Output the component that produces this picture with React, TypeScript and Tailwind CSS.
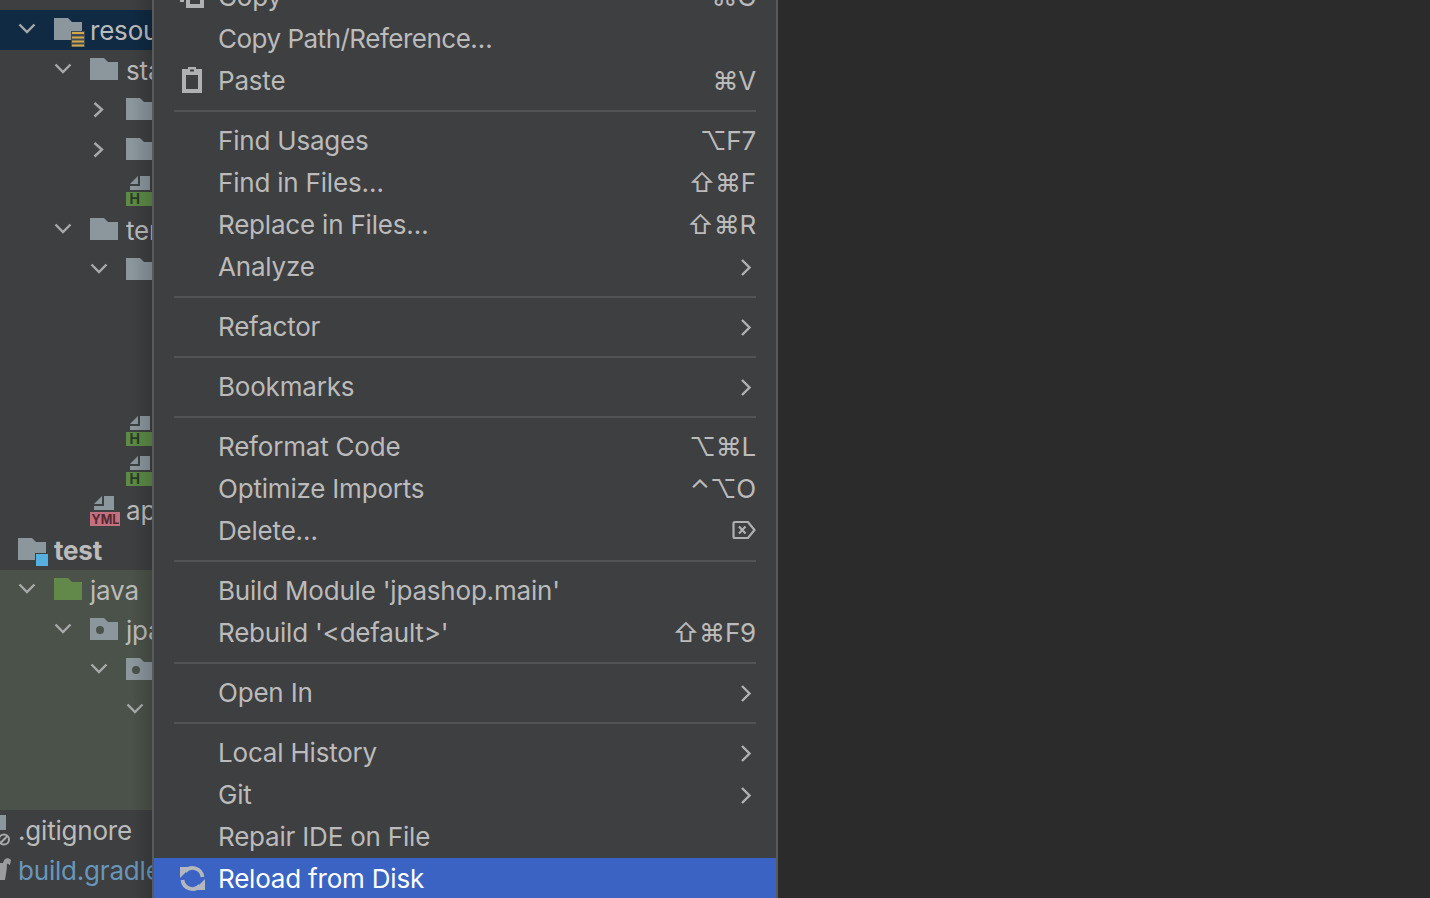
import React from "react";

const Chevron = ({ open }: { open: boolean }) => (
  <svg width="36" height="40" viewBox="0 0 36 40" fill="none" stroke="#a7a9aa" strokeWidth="2.4" className="shrink-0">
    {open ? <path d="M1.5 14.5 L9 22 L16.5 14.5" /> : <path d="M4.5 13 L12 19.5 L4.5 26.5" />}
  </svg>
);

const Folder = ({ color = "#8b969d", dot, badge }: { color?: string; dot?: boolean; badge?: string }) => (
  <svg width="36" height="40" viewBox="0 0 36 40" className="shrink-0">
    <path d="M0 8 H14 L18 12 H28 V30 H0 Z" fill={color} />
    {dot && <circle cx="10" cy="20" r="4" fill="#4b5249" />}
    {badge === "res" && (
      <g>
        <rect x="17" y="21" width="14" height="16" fill="#3e4a55" />
        <rect x="18" y="22" width="12" height="2" fill="#d5a94a" />
        <rect x="18" y="26.5" width="12" height="2" fill="#d5a94a" />
        <rect x="18" y="30.5" width="12" height="2" fill="#d5a94a" />
        <rect x="18" y="34.5" width="12" height="2" fill="#d5a94a" />
      </g>
    )}
    {badge === "test" && <rect x="17.5" y="23.5" width="13" height="13" fill="#56b0df" stroke="#3e3f41" strokeWidth="1" />}
  </svg>
);

const FileBadge = ({ label, color, w }: { label: string; color: string; w: number }) => (
  <svg width="36" height="40" viewBox="0 0 36 40" className="shrink-0">
    <path d="M4 14 L12 6 V14 Z M4 20 V16 H14 V6 H24 V20 Z" fill="#8b969d" />
    <rect x="0" y="22" width={w} height="14" fill={color} />
    <text x={label === "H" ? 3.5 : 1.5} y="34" fontSize={label === "H" ? 14 : 12.5} fontWeight="700" fill={label === "H" ? "#2c3a28" : "#4f2a33"} fontFamily="Inter, sans-serif">
      {label}
    </text>
  </svg>
);

const TreeRow = ({ pad, open, icon, text, cls }: { pad: string; open?: boolean; icon?: React.ReactNode; text?: string; cls?: string }) => (
  <div className={"flex h-10 items-center whitespace-nowrap " + pad}>
    {open !== undefined && <Chevron open={open} />}
    {icon}
    {text && <span className={"text-[26px] tracking-[-0.2px] " + (cls ?? "text-[#bbbbbb]")}>{text}</span>}
  </div>
);

const Separator = () => <div className="mx-5 mt-[9px] mb-[7px] h-0.5 bg-[#515355]" />;

const MenuChevron = () => (
  <svg width="16" height="22" viewBox="0 0 16 22" fill="none" stroke="#afb1b3" strokeWidth="2.4" className="shrink-0">
    <path d="M2 5 L9.5 12.5 L2 20" />
  </svg>
);

const DeleteIcon = () => (
  <svg width="24" height="20" viewBox="0 0 24 20" fill="none" stroke="#afb1b3" strokeWidth="2.2" className="block">
    <path d="M3 2 H16 L22.5 10 L16 18 H3 Q1.5 18 1.5 16.5 V3.5 Q1.5 2 3 2 Z" />
    <path d="M7 6.5 L13.5 13.5 M13.5 6.5 L7 13.5" />
  </svg>
);

const MenuItem = ({ label, keys, arrow, icon, active, cls }: { label: string; keys?: React.ReactNode; arrow?: boolean; icon?: React.ReactNode; active?: boolean; cls?: string }) => (
  <div className={"flex items-center pr-5 text-[26px] tracking-[-0.2px] " + (active ? "mt-px h-[41px] bg-[#3a63c4] text-white" : "h-[42px] text-[#bbbbbb]")}>
    <div className="flex w-16 justify-center pl-3">{icon}</div>
    <span className={"flex-1 whitespace-nowrap " + (cls ?? "")}>{label}</span>
    {keys && <span className="whitespace-nowrap">{keys}</span>}
    {arrow && <MenuChevron />}
  </div>
);

export default function App() {
  return (
    <div className="flex h-[898px] w-[1430px] overflow-hidden bg-[#2b2b2b] font-['Inter','DejaVu_Sans',sans-serif]">
      <div className="relative flex w-[152px] shrink-0 flex-col overflow-hidden bg-[#3e3f41] pt-[10px]">
        <div className="bg-[#0f2a42]">
          <TreeRow pad="pl-[18px]" open icon={<Folder badge="res" />} text="resources" />
        </div>
        <TreeRow pad="pl-[54px]" open icon={<Folder />} text="static" />
        <TreeRow pad="pl-[90px]" open={false} icon={<Folder />} text="css" />
        <TreeRow pad="pl-[90px]" open={false} icon={<Folder />} text="js" />
        <TreeRow pad="pl-[126px]" icon={<FileBadge label="H" color="#5d8a46" w={36} />} text="index.html" />
        <TreeRow pad="pl-[54px]" open icon={<Folder />} text="templates" />
        <TreeRow pad="pl-[90px]" open icon={<Folder />} text="fragments" />
        <div className="h-[120px] shrink-0" />
        <TreeRow pad="pl-[126px]" icon={<FileBadge label="H" color="#5d8a46" w={36} />} text="home.html" />
        <TreeRow pad="pl-[126px]" icon={<FileBadge label="H" color="#5d8a46" w={36} />} text="hello.html" />
        <TreeRow pad="pl-[90px]" icon={<FileBadge label="YML" color="#c4707f" w={30} />} text="application.yml" />
        <TreeRow pad="pl-[18px]" icon={<Folder badge="test" />} text="test" cls="font-bold text-[#bbbbbb]" />
        <div className="h-[240px] shrink-0 bg-[#4b5249]">
          <TreeRow pad="pl-[18px]" open icon={<Folder color="#62884a" />} text="java" />
          <TreeRow pad="pl-[54px]" open icon={<Folder dot />} text="jpabook" />
          <TreeRow pad="pl-[90px]" open icon={<Folder dot />} text="jpashop" />
          <TreeRow pad="pl-[126px]" open />
        </div>
        <TreeRow pad="-ml-[18px]" icon={
          <svg width="36" height="40" viewBox="0 0 36 40" className="shrink-0">
            <path d="M4 5 H24 V20 H4 Z" fill="#8b969d" />
            <circle cx="22" cy="29.5" r="5" fill="none" stroke="#a7a9aa" strokeWidth="2" />
            <path d="M18.5 33 L25.5 26" stroke="#a7a9aa" strokeWidth="2" />
          </svg>
        } text=".gitignore" />
        <TreeRow pad="-ml-[18px]" icon={
          <svg width="36" height="40" viewBox="0 0 36 40" className="shrink-0">
            <path d="M8 13 H21 C22 8 26 7 29 10 L28 15 L25 13.5 C25 18 24 24 23 30 H18 L17 24 H14 L13 30 H8 Z" fill="#9a9c9e" />
          </svg>
        } text="build.gradle" cls="text-[#6897bb]" />
        <div className="absolute inset-y-0 right-0 w-5 bg-gradient-to-r from-transparent to-black/15" />
      </div>

      <div className="h-[898px] w-[626px] shrink-0 overflow-hidden border-x-2 border-x-[#57595b] bg-[#3e3f41]">
        <div className="-mt-[25px]">
          <MenuItem label="Copy" keys="⌘C" icon={
            <svg width="24" height="26" viewBox="0 0 24 26" fill="#afb1b3" className="block">
              <path fillRule="evenodd" d="M6 8 H24 V25 H6 Z M10 12 V21 H20 V12 Z" />
              <path d="M0 3 H14 V6 H4 V19 H0 Z" />
            </svg>
          } />
          <MenuItem label="Copy Path/Reference…" cls="tracking-[-0.5px]" />
          <MenuItem label="Paste" keys="⌘V" icon={
            <svg width="20" height="26" viewBox="0 0 20 26" className="block">
              <path fill="#afb1b3" fillRule="evenodd" d="M0 2 H6 V0 H14 V2 H20 V26 H0 Z M4 8 V22 H16 V8 Z M8 2.5 V4.5 H12 V2.5 Z" />
            </svg>
          } />
          <Separator />
          <MenuItem label="Find Usages" keys="⌥F7" />
          <MenuItem label="Find in Files…" keys="⇧⌘F" />
          <MenuItem label="Replace in Files…" keys="⇧⌘R" />
          <MenuItem label="Analyze" arrow />
          <Separator />
          <MenuItem label="Refactor" arrow />
          <Separator />
          <MenuItem label="Bookmarks" arrow />
          <Separator />
          <MenuItem label="Reformat Code" keys="⌥⌘L" />
          <MenuItem label="Optimize Imports" keys="⌃⌥O" />
          <MenuItem label="Delete…" keys={<DeleteIcon />} />
          <Separator />
          <MenuItem label="Build Module 'jpashop.main'" />
          <MenuItem label="Rebuild '<default>'" keys="⇧⌘F9" />
          <Separator />
          <MenuItem label="Open In" arrow />
          <Separator />
          <MenuItem label="Local History" arrow />
          <MenuItem label="Git" arrow />
          <MenuItem label="Repair IDE on File" />
          <MenuItem label="Reload from Disk" active icon={
            <svg width="25" height="25" viewBox="0 0 25 25" fill="none" stroke="#b4b7bd" strokeWidth="3.8" className="block">
              <path d="M5 5.5 A10 10 0 0 1 22.5 11" />
              <path d="M20 19.5 A10 10 0 0 1 2.5 14" />
              <path d="M0 1 H11 L0 12 Z" fill="#b4b7bd" stroke="none" />
              <path d="M25 24 H14 L25 13 Z" fill="#b4b7bd" stroke="none" />
            </svg>
          } />
        </div>
      </div>
      <div className="flex-1 bg-[#2b2b2b]" />
    </div>
  );
}
